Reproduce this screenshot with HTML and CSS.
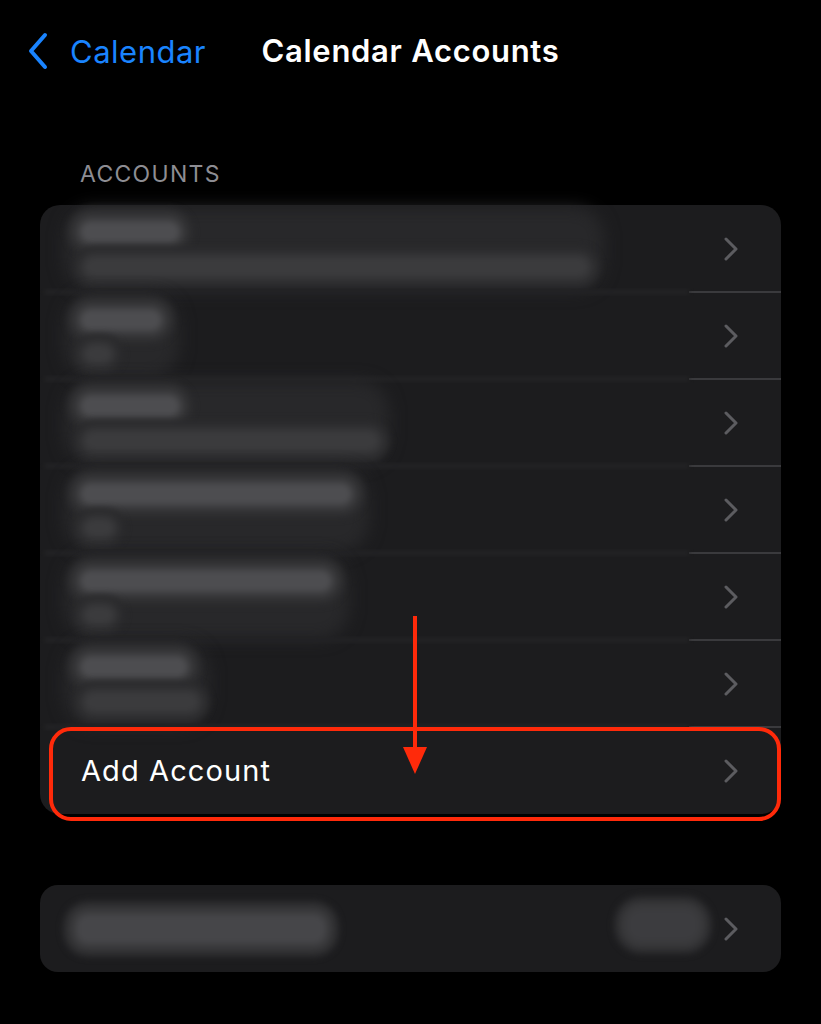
FILE: index.html
```html
<!DOCTYPE html>
<html lang="en">
<head>
<meta charset="utf-8">
<title>Calendar Accounts</title>
<link rel="stylesheet" href="styles.css">
</head>
<body>
<header class="nav">
  <a class="back" href="#">
    <svg class="back-icon" width="24" height="38" viewBox="0 0 24 38"><path d="M19 3 L5 19 L19 35" fill="none" stroke="#1a84ff" stroke-width="4" stroke-linecap="round" stroke-linejoin="round"/></svg>
    <span>Calendar</span>
  </a>
  <h1 class="title">Calendar Accounts</h1>
  <span></span>
</header>

<main class="content">
  <div class="section-label">ACCOUNTS</div>

  <div class="card accounts">
    <div class="row">
      <div class="redacted">
        <span class="haze" style="width:540px;height:84px"></span>
        <span class="blob" style="width:100px"></span>
        <span class="blob dim" style="width:505px"></span>
      </div>
      <svg class="chev" viewBox="0 0 16 24"><path d="M3 2 L13 12 L3 22" /></svg>
      <div class="sep"><span class="sep-soft"></span><span class="sep-line"></span></div>
    </div>
    <div class="row">
      <div class="redacted">
        <span class="haze" style="width:115px;height:84px"></span>
        <span class="blob" style="width:82px"></span>
        <span class="blob dim small" style="width:28px"></span>
      </div>
      <svg class="chev" viewBox="0 0 16 24"><path d="M3 2 L13 12 L3 22" /></svg>
      <div class="sep"><span class="sep-soft"></span><span class="sep-line"></span></div>
    </div>
    <div class="row">
      <div class="redacted">
        <span class="haze" style="width:325px;height:84px"></span>
        <span class="blob" style="width:100px"></span>
        <span class="blob dim" style="width:295px"></span>
      </div>
      <svg class="chev" viewBox="0 0 16 24"><path d="M3 2 L13 12 L3 22" /></svg>
      <div class="sep"><span class="sep-soft"></span><span class="sep-line"></span></div>
    </div>
    <div class="row">
      <div class="redacted">
        <span class="haze" style="width:305px;height:84px"></span>
        <span class="blob" style="width:272px"></span>
        <span class="blob dim small" style="width:30px"></span>
      </div>
      <svg class="chev" viewBox="0 0 16 24"><path d="M3 2 L13 12 L3 22" /></svg>
      <div class="sep"><span class="sep-soft"></span><span class="sep-line"></span></div>
    </div>
    <div class="row">
      <div class="redacted">
        <span class="haze" style="width:285px;height:84px"></span>
        <span class="blob" style="width:252px"></span>
        <span class="blob dim small" style="width:30px"></span>
      </div>
      <svg class="chev" viewBox="0 0 16 24"><path d="M3 2 L13 12 L3 22" /></svg>
      <div class="sep"><span class="sep-soft"></span><span class="sep-line"></span></div>
    </div>
    <div class="row">
      <div class="redacted">
        <span class="haze" style="width:145px;height:84px"></span>
        <span class="blob" style="width:108px"></span>
        <span class="blob dim" style="width:115px"></span>
      </div>
      <svg class="chev" viewBox="0 0 16 24"><path d="M3 2 L13 12 L3 22" /></svg>
      <div class="sep"><span class="sep-soft"></span><span class="sep-line"></span></div>
    </div>
    <div class="row add-row">
      <span class="add-label">Add Account</span>
      <svg class="chev" viewBox="0 0 16 24"><path d="M3 2 L13 12 L3 22" /></svg>
      <span class="highlight"></span>
    </div>

    <div class="pointer">
      <span class="pointer-shaft"></span>
      <span class="pointer-head"></span>
    </div>
  </div>

  <div class="card single">
    <div class="row">
      <div class="redacted single-line">
        <span class="blob wide" style="width:250px"></span>
      </div>
      <span class="blob side"></span>
      <svg class="chev" viewBox="0 0 16 24"><path d="M3 2 L13 12 L3 22" /></svg>
    </div>
  </div>
</main>
</body>
</html>
```

FILE: styles.css
```css
html, body {
  margin: 0;
  padding: 0;
  background: #000;
}

body {
  width: 821px;
  height: 1024px;
  overflow: hidden;
  font-family: Inter, "Liberation Sans", sans-serif;
  color: #fff;
}

/* ---- navigation bar ---- */
.nav {
  height: 100px;
  display: grid;
  grid-template-columns: 1fr auto 1fr;
  align-items: center;
}

.back {
  display: flex;
  align-items: center;
  gap: 20px;
  padding-left: 26px;
  color: #1a84ff;
  text-decoration: none;
  font-size: 31px;
  letter-spacing: 0.5px;
  margin-top: 2px;
}

.back-icon {
  display: block;
}

.title {
  margin: 0;
  font-size: 31px;
  font-weight: 600;
  letter-spacing: 0.7px;
  color: #fff;
}

/* ---- grouped list ---- */
.content {
  padding: 0 40px;
}

.section-label {
  margin: 61px 0 0 40px;
  font-size: 23px;
  letter-spacing: 1.3px;
  color: #8d8d93;
  line-height: 27px;
}

.card {
  position: relative;
  background: #1c1c1e;
  border-radius: 20px;
}

.accounts {
  margin-top: 17px;
}

.single {
  margin-top: 71px;
  border-radius: 18px;
}

.row {
  position: relative;
  height: 87px;
  display: flex;
  align-items: center;
  padding: 0 42px 0 40px;
}

.chev {
  margin-left: auto;
  width: 16px;
  height: 24px;
  flex: none;
}

.chev path {
  fill: none;
  stroke: #5c5c60;
  stroke-width: 3;
  stroke-linecap: round;
  stroke-linejoin: round;
}

/* row dividers: softened where they run under the redacted text */
.sep {
  position: absolute;
  left: 0;
  right: 0;
  bottom: -4px;
  height: 8px;
  display: flex;
  align-items: center;
  overflow: hidden;
}

.sep-soft {
  flex: 1;
  height: 6px;
  margin-left: 4px;
  background: #222224;
  filter: blur(2px);
}

.sep-line {
  width: 92px;
  height: 1.5px;
  background: #3a3a3d;
}

/* ---- redacted (blurred) account names ---- */
.redacted {
  position: relative;
  display: flex;
  flex-direction: column;
  align-items: flex-start;
  justify-content: center;
  gap: 14px;
  height: 100%;
}

.haze {
  position: absolute;
  left: -16px;
  top: 2px;
  background: #28282a;
  border-radius: 30px;
  filter: blur(8px);
}

.blob {
  position: relative;
  display: block;
  height: 22px;
  border-radius: 12px;
  background: #4d4d50;
  box-shadow: 0 0 0 7px #38383a, 0 0 0 13px #2d2d2f;
  filter: blur(3px);
}

.blob.dim {
  height: 20px;
  background: #3b3b3d;
  box-shadow: 0 0 0 6px #313133, 0 0 0 11px #2a2a2c;
  margin-left: 4px;
}

.blob.small {
  height: 18px;
}

.single-line .blob.wide {
  height: 30px;
  margin-left: -4px;
  background: #464649;
}

.blob.side {
  position: absolute;
  left: 587px;
  top: 24px;
  width: 72px;
  height: 32px;
  border-radius: 14px;
  background: #3c3c3f;
}

/* ---- add account + callout ---- */
.add-label {
  font-size: 29px;
  letter-spacing: 1.1px;
  color: #fff;
  margin-left: 1px;
}

.highlight {
  position: absolute;
  left: 9px;
  right: 0;
  top: 0;
  bottom: -7px;
  border: 4px solid #ff2a0a;
  border-radius: 22px;
}

.pointer {
  position: absolute;
  left: 363px;
  top: 411px;
  width: 24px;
  display: flex;
  flex-direction: column;
  align-items: center;
}

.pointer-shaft {
  width: 4px;
  height: 134px;
  background: #ff2a0a;
}

.pointer-head {
  width: 0;
  height: 0;
  margin-top: -3px;
  border-left: 12px solid transparent;
  border-right: 12px solid transparent;
  border-top: 27px solid #ff2a0a;
}
```
